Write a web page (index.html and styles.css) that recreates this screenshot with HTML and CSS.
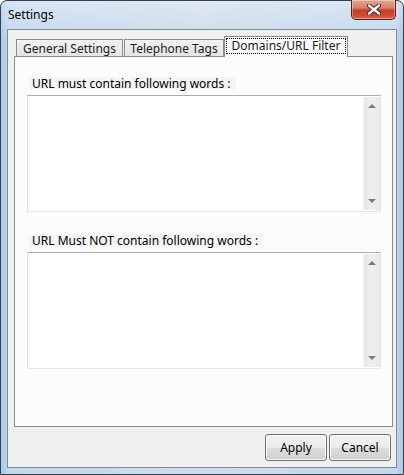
FILE: index.html
```html
<!DOCTYPE html>
<html>
<head>
<meta charset="utf-8">
<title>Settings</title>
<link rel="stylesheet" href="styles.css">
</head>
<body>
<div class="window">
  <div class="titlebar">
    <span class="title">Settings</span>
    <div class="close">
      <svg width="14" height="11" viewBox="0 0 14 11">
        <path d="M2 1.5 L12 9.5 M12 1.5 L2 9.5" stroke="#4a1a12" stroke-width="4.2" stroke-linecap="round"/>
        <path d="M2 1.5 L12 9.5 M12 1.5 L2 9.5" stroke="#ffffff" stroke-width="2.4" stroke-linecap="round"/>
      </svg>
    </div>
  </div>
  <div class="client">
    <div class="tabs">
      <div class="tab tab-general">General Settings</div>
      <div class="tab tab-phone">Telephone Tags</div>
      <div class="tab tab-active"><span class="focus">Domains/URL Filter</span></div>
    </div>
    <div class="panel">
      <div class="field">
        <span class="label">URL must contain following words :</span>
        <div class="textbox">
          <div class="scrollbar"><span class="arrow up"></span><span class="arrow down"></span></div>
        </div>
      </div>
      <div class="field field-second">
        <span class="label">URL Must NOT contain following words :</span>
        <div class="textbox">
          <div class="scrollbar"><span class="arrow up"></span><span class="arrow down"></span></div>
        </div>
      </div>
    </div>
    <div class="buttons">
      <button class="btn">Apply</button>
      <button class="btn">Cancel</button>
    </div>
  </div>
</div>
</body>
</html>
```

FILE: styles.css
```css
html, body {
  margin: 0;
  padding: 0;
  background: #ffffff;
}

body {
  font-family: "Noto Sans", "DejaVu Sans", sans-serif;
  font-size: 12px;
  color: #000;
}

.window {
  box-sizing: border-box;
  width: 404px;
  height: 475px;
  border: 1px solid #3a3f46;
  border-radius: 7px 7px 0 0;
  padding: 0 6px 6px 6px;
  display: flex;
  flex-direction: column;
  background:
    linear-gradient(to bottom, rgba(255,255,255,0.35), rgba(255,255,255,0) 40px),
    linear-gradient(to right, #a9c9ec 0, #c2d8ef 8px, #cddcec 50%, #c2d8ef calc(100% - 8px), #a9c9ec 100%);
}

.titlebar {
  height: 28px;
  display: flex;
  justify-content: space-between;
  align-items: flex-start;
}

.title {
  padding: 6px 0 0 1px;
  font-size: 12px;
  line-height: 16px;
  color: #000;
}

.close {
  box-sizing: border-box;
  width: 45px;
  height: 20px;
  margin-top: -1px;
  margin-right: 1px;
  border: 1px solid #5a1c14;
  border-top: none;
  border-radius: 0 0 5px 5px;
  background: linear-gradient(to bottom, #e7a595 0, #d8826c 40%, #c23f27 55%, #cc4a31 80%, #d7694c 100%);
  box-shadow: inset 0 0 0 1px rgba(255,255,255,0.35);
  display: flex;
  align-items: center;
  justify-content: center;
}

.client {
  flex: 1;
  border: 1px solid #858a91;
  background: #f0f0f0;
  display: flex;
  flex-direction: column;
  padding: 6px 3px 6px 6px;
}

.tabs {
  display: flex;
  align-items: flex-end;
  height: 20px;
  margin-left: 2px;
  position: relative;
  z-index: 1;
}

.tab {
  box-sizing: border-box;
  height: 17px;
  border: 1px solid #898c95;
  border-bottom: none;
  background: linear-gradient(to bottom, #f2f2f2, #e4e4e4);
  font-size: 12px;
  line-height: 17px;
  color: #1b1b1b;
  text-align: center;
  white-space: nowrap;
}

.tab-general { width: 107px; }
.tab-phone { width: 101px; border-left: none; width: 100px; margin-left: 1px; border-left: 1px solid #898c95; }

.tab-active {
  width: 124px;
  height: 21px;
  margin-bottom: -1px;
  background: #fcfcfc;
  padding: 1px 1px 0 1px;
  line-height: 14px;
}

.focus {
  display: block;
  height: 16px;
  box-sizing: border-box;
  border: 1px dotted #000;
  line-height: 14px;
}

.panel {
  flex: 1;
  border: 1px solid #898c95;
  background: #fcfcfc;
  padding: 20px 11px 0 12px;
  display: flex;
  flex-direction: column;
}

.field {
  display: flex;
  flex-direction: column;
  align-items: flex-start;
}

.field-second {
  margin-top: 22px;
}

.label {
  margin-left: 2px;
  padding: 0 5px 0 3px;
  height: 13px;
  line-height: 13px;
  background: #f5f5f5;
  font-size: 12px;
  color: #000;
  white-space: nowrap;
}

.textbox {
  box-sizing: border-box;
  align-self: stretch;
  margin-top: 5px;
  height: 117px;
  background: #ffffff;
  border: 1px solid #dfe3e9;
  border-top-color: #abadb3;
  border-bottom-color: #e3e9ef;
  padding: 1px 0;
  display: flex;
  justify-content: flex-end;
}

.scrollbar {
  box-sizing: border-box;
  width: 17px;
  background: linear-gradient(to right, #e6e6e6, #eeeeee 40%, #e9e9e9);
  border-left: 1px solid #f4f4f4;
  display: flex;
  flex-direction: column;
  justify-content: space-between;
  align-items: center;
  padding: 7px 0 7px 0;
}

.arrow {
  width: 0;
  height: 0;
  border-left: 4px solid transparent;
  border-right: 4px solid transparent;
}

.arrow.up {
  border-bottom: 4px solid #7a7a7a;
}

.arrow.down {
  border-top: 4px solid #7a7a7a;
}

.buttons {
  display: flex;
  justify-content: flex-end;
  gap: 2px;
  margin-top: 7px;
  margin-right: 2px;
}

.btn {
  box-sizing: border-box;
  width: 62px;
  height: 27px;
  border: 1px solid #707070;
  border-radius: 3px;
  background: linear-gradient(to bottom, #f2f2f2 0, #ebebeb 50%, #dddddd 51%, #cfcfcf 100%);
  box-shadow: inset 0 0 0 1px #fbfbfb;
  font-family: "Noto Sans", "DejaVu Sans", sans-serif;
  font-size: 12px;
  color: #000;
  padding: 0;
}
```
